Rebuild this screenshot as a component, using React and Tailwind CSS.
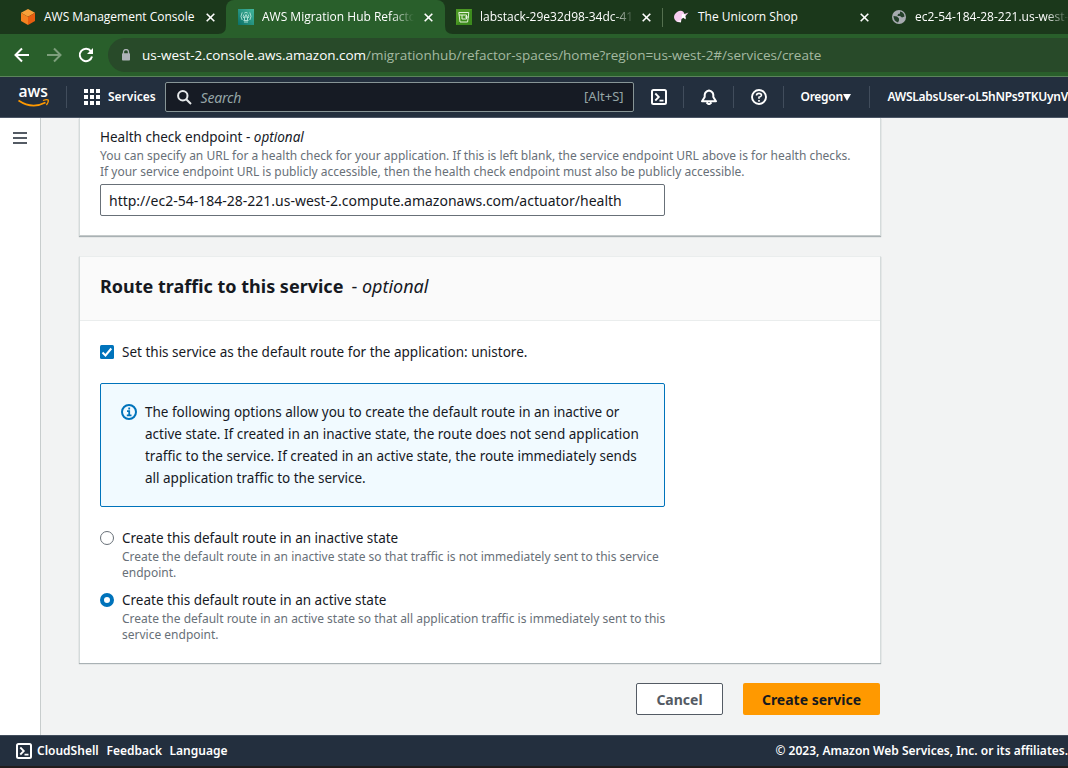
import React from "react";

function Close() {
  return (
    <svg width="9" height="9" viewBox="0 0 9 9" className="shrink-0" stroke="#fff" strokeWidth="1.6">
      <path d="M.7.7l7.6 7.6M8.3.7L.7 8.3" />
    </svg>
  );
}

function Shell({ className = "" }) {
  return (
    <svg width="16" height="16" viewBox="0 0 16 16" fill="none" stroke="#fff" className={"shrink-0 " + className}>
      <rect x="1" y="1" width="14" height="14" rx="1.5" strokeWidth="2" />
      <path d="M4.3 4.5L7.8 8l-3.5 3.5M8.5 11.6h4" strokeWidth="1.8" />
    </svg>
  );
}

function BrowserTabs() {
  return (
    <div className="h-[34px] bg-[#1b381b] flex text-[12px] text-white font-['Open_Sans','Noto_Sans',sans-serif] whitespace-nowrap overflow-hidden">
      <div className="w-[226px] shrink-0 flex items-center pl-5 pr-[11px]">
        <svg width="16" height="16" viewBox="0 0 16 16" className="shrink-0">
          <path d="M8 0l7 3.8L8 7.7 1 3.8z" fill="#f9a13a" />
          <path d="M1 3.8l7 3.9V16l-7-4z" fill="#f58220" />
          <path d="M15 3.8L8 7.7V16l7-4z" fill="#e85d10" />
        </svg>
        <span className="ml-2 flex-1">AWS Management Console</span>
        <Close />
      </div>
      <div className="w-[219px] shrink-0 flex items-center pl-3 pr-3 bg-[#295f2b] rounded-t-[8px] relative">
        <svg width="8" height="8" viewBox="0 0 8 8" className="absolute -left-2 bottom-0"><path d="M8 0v8H0q8 0 8-8z" fill="#295f2b" /></svg>
        <svg width="8" height="8" viewBox="0 0 8 8" className="absolute -right-2 bottom-0"><path d="M0 0v8h8Q0 8 0 0z" fill="#295f2b" /></svg>
        <svg width="16" height="16" viewBox="0 0 16 16" fill="none" className="shrink-0">
          <defs>
            <linearGradient id="hub" x1="0" y1="1" x2="1" y2="0"><stop stopColor="#0b7067" /><stop offset="1" stopColor="#43b79c" /></linearGradient>
          </defs>
          <path d="M0 0h16v16H0z" fill="url(#hub)" />
          <path d="M4.2 3.4Q1.8 7.5 4.2 11M11.8 3.4q2.4 4.1 0 7.6M5.7 5.5q-1 2 0 3.5M10.3 5.5q1 2 0 3.5M6.2 4.2Q8 2.5 9.800 4.200M5.500 11.500h5M8 5.500L6.500 8v3M8 5.500L9.500 8v3M6.500 8h3M6 13h4" stroke="#b7e6da" strokeWidth=".9" />
        </svg>
        <span className="ml-2 w-[152px] overflow-hidden [mask-image:linear-gradient(to_right,#000_85%,transparent)]">AWS Migration Hub Refactor Spaces</span>
        <span className="flex-1" />
        <Close />
      </div>
      <div className="w-[218px] shrink-0 flex items-center pl-[11px] pr-[12px]">
        <svg width="16" height="16" viewBox="0 0 16 16" fill="none" className="shrink-0">
          <path d="M0 0h16v16H0z" fill="#3d8b1d" />
          <path d="M0 0h16L0 16z" fill="#5fa92e" opacity=".45" />
          <path d="M2.800 3.500h10l-1.200 9.500H4zM3 6h7.500v4H6M6 6v4M9 8h4" stroke="#e4f2d9" strokeWidth="1" />
        </svg>
        <span className="ml-2 w-[155px] overflow-hidden [mask-image:linear-gradient(to_right,#000_85%,transparent)]">labstack-29e32d98-34dc-411f-9</span>
        <span className="flex-1" />
        <Close />
      </div>
      <div className="w-[217px] shrink-0 flex items-center pl-[11px] pr-[11px] relative">
        <div className="absolute left-[-1px] top-2 h-[19px] w-px bg-[#54704f]" />
        <svg width="15" height="14" viewBox="0 0 15 14" className="shrink-0">
          <path d="M3 2Q7-.5 9.500 2l1 2 4-1.500-3.500 4 .5 3-2.500-2-1.500 1.500-.5 3Q3 13 1 10T1 4z" fill="#f7cdf0" />
          <path d="M8 4l3 .5L12 9 9.500 7.500 7.500 9zM3 11l4-.5v2z" fill="#fff" />
        </svg>
        <span className="ml-[9px] flex-1">The Unicorn Shop</span>
        <Close />
      </div>
      <div className="flex-1 flex items-center pl-3 relative overflow-hidden">
        <div className="absolute left-[-1px] top-2 h-[19px] w-px bg-[#54704f]" />
        <svg width="14" height="14" viewBox="0 0 14 14" className="shrink-0">
          <circle cx="7" cy="7" r="7" fill="#a6aaaf" />
          <path d="M1.500 6l3.500.5 2 2v2l-1 2Q1.500 11 1.500 6zM8 1.500q4 .5 4.500 5L10 7.500 8 6H5.500L6 4l2-.5z" fill="#24402a" />
        </svg>
        <span className="ml-[9px] w-[154px] shrink-0 overflow-hidden [mask-image:linear-gradient(to_right,#000_85%,transparent)]">ec2-54-184-28-221.us-west-2.co</span>
      </div>
    </div>
  );
}

function Toolbar() {
  return (
    <div className="h-[43px] bg-[#295f2b] border-b border-[#5b845b] flex items-center pl-[14px]">
      <svg width="16" height="16" viewBox="0 0 16 16" fill="none" stroke="#fff" strokeWidth="2"><path d="M15 8H2M8 1.500L1.500 8 8 14.500" /></svg>
      <svg width="16" height="16" viewBox="0 0 16 16" fill="none" stroke="#7d9f7c" strokeWidth="2" className="ml-4"><path d="M1 8h13M8 1.500L14.500 8 8 14.500" /></svg>
      <svg width="16" height="16" viewBox="0 0 16 16" className="ml-4"><path d="M13 4.300A6.200 6.200 0 1 0 14 9.500" fill="none" stroke="#fff" strokeWidth="2" /><path d="M15 1v6H9z" fill="#fff" /></svg>
      <div className="ml-[14px] flex-1 h-[34px] bg-[#284a29] rounded-l-full flex items-center pl-[13px]">
        <svg width="10" height="12" viewBox="0 0 10 12" className="shrink-0"><path d="M2.500 5V3a2.500 2.500 0 0 1 5 0v2" fill="none" stroke="#aeb3b8" strokeWidth="1.300" /><rect x="1" y="4.300" width="8" height="7.200" rx=".8" fill="#aeb3b8" /></svg>
        <span className="ml-[11px] text-[13.500px] leading-5 tracking-[-0.02px] text-[#a4b9a1] whitespace-nowrap font-['Open_Sans','Noto_Sans',sans-serif]">
          <span className="text-white">us-west-2.console.aws.amazon.com</span>/migrationhub/refactor-spaces/home?region=us-west-2#/services/create
        </span>
      </div>
    </div>
  );
}

function Divider() {
  return <div className="w-px h-[22px] bg-[#414d5c] shrink-0" />;
}

function Header() {
  return (
    <div className="h-[41px] bg-[#232f3e] border-b border-[#4b5666] flex items-center text-white whitespace-nowrap overflow-hidden text-[12px] font-semibold">
      <svg width="32" height="22" viewBox="0 0 32 22" className="ml-[18px] shrink-0">
        <text x="0.500" y="10.500" fontSize="16" fontWeight="600" fontFamily="Open Sans" textLength="29.500" lengthAdjust="spacingAndGlyphs" fill="#fff">aws</text>
        <path d="M.5 14.500Q14 23.500 27.500 16.500" fill="none" stroke="#f90" strokeWidth="1.700" />
        <path d="M25 14.500q4-1.500 5.200-.5.600 2-1.800 5" fill="none" stroke="#f90" strokeWidth="1.300" />
      </svg>
      <div className="ml-4 flex"><Divider /></div>
      <svg width="16" height="16" viewBox="0 0 16 16" className="ml-[17px] shrink-0" fill="#fff">
        <path d="M0 0h4v4H0zM6 0h4v4H6zM12 0h4v4h-4zM0 6h4v4H0zM6 6h4v4H6zM12 6h4v4h-4zM0 12h4v4H0zM6 12h4v4H6zM12 12h4v4h-4z" />
      </svg>
      <span className="ml-2 w-[62px]">Services</span>
      <div className="w-[469px] h-[30px] shrink-0 bg-[#161b24] border border-[#879596] rounded-[2px] flex items-center pl-[11px] pr-[9px] font-normal text-[14px] text-[#95a5a6]">
        <svg width="15" height="15" viewBox="0 0 15 15" fill="none" stroke="#e6e9ea" strokeWidth="2"><circle cx="5.800" cy="5.800" r="4.700" /><path d="M9.200 9.200l4.800 4.800" /></svg>
        <span className="ml-[9px] italic flex-1 tracking-[-0.2px]">Search</span>
        <span className="text-[13px]">[Alt+S]</span>
      </div>
      <Shell className="ml-[17px]" />
      <div className="ml-4 flex"><Divider /></div>
      <svg width="16" height="16" viewBox="0 0 16 16" className="ml-[17px] shrink-0" fill="none" stroke="#fff" strokeWidth="2"><path d="M1 12.200L3.700 8V5.800Q4 2.500 8 1.500q4 1 4.300 4.300V8l2.700 4.200zM5.500 13.500L8 15.500l2.500-2" strokeLinejoin="round" /></svg>
      <div className="ml-4 flex"><Divider /></div>
      <svg width="16" height="16" viewBox="0 0 16 16" className="ml-[17px] shrink-0" fill="none" stroke="#fff" strokeWidth="1.900"><circle cx="8" cy="8" r="7" /><path d="M5.500 6.500Q5.600 4.400 8 4.400t2.500 1.800Q10.400 7.400 8 8.200V9.800M8 11v1.800" strokeWidth="1.600" /></svg>
      <div className="ml-4 flex"><Divider /></div>
      <span className="ml-[17px] w-[47px] tracking-[-0.3px]">Oregon</span>
      <svg width="8" height="7" viewBox="0 0 8 7" className="shrink-0" fill="#fff"><path d="M0 0h8L4 7z" /></svg>
      <div className="ml-[18px] flex"><Divider /></div>
      <span className="ml-[17px] tracking-[-0.25px]">AWSLabsUser-oL5hNPs9TKUynV</span>
    </div>
  );
}

const cardBase = "w-[802px] bg-white border-x border-[#d5dbdb] shadow-[0_1px_1px_rgba(0,28,36,0.3)] ";

function Radio({ checked, title, lines }) {
  return (
    <div className="flex">
      <span className={checked ? "mt-[4px] w-[14px] h-[14px] rounded-full border-[4.500px] border-[#0073bb] bg-white" : "mt-[4px] w-[14px] h-[14px] rounded-full border border-[#687078] bg-white"} />
      <div className="ml-2">
        <div className="h-[22px] leading-[22px] text-[13.500px]">{title}</div>
        {lines.map((l) => (
          <div key={l} className="text-[12px] leading-4 text-[#687078]">{l}</div>
        ))}
      </div>
    </div>
  );
}

export default function App() {
  return (
    <div className="w-[1068px] h-[768px] overflow-hidden flex flex-col bg-[#211c1c] text-[#16191f] font-['Noto_Sans','Open_Sans',sans-serif]">
      <BrowserTabs />
      <Toolbar />
      <Header />
      <div className="flex-1 min-h-0 flex bg-[#f2f3f3] whitespace-nowrap">
        <div className="w-[41px] shrink-0 bg-white border-r border-[#c8cdcd] pt-[14px] pl-[13px]">
          <svg width="14" height="12" viewBox="0 0 14 12" fill="#545b64"><path d="M0 0h14v2H0zM0 5h14v2H0zM0 10h14v2H0z" /></svg>
        </div>
        <div className="ml-[38px] w-[802px]">
          <div className={cardBase + "h-[118px] pl-5 pt-2 border-b border-b-[#c5caca]"}>
            <div className="text-[13.500px] leading-[22px]">Health check endpoint - <i>optional</i></div>
            <div className="text-[12px] leading-4 text-[#687078]">You can specify an URL for a health check for your application. If this is left blank, the service endpoint URL above is for health checks.</div>
            <div className="text-[12px] leading-4 text-[#687078]">If your service endpoint URL is publicly accessible, then the health check endpoint must also be publicly accessible.</div>
            <div className="mt-1 w-[565px] h-8 border border-[#687078] rounded-[2px] pl-2 flex items-center text-[14px]">http://ec2-54-184-28-221.us-west-2.compute.amazonaws.com/actuator/health</div>
          </div>
          <div className={cardBase + "mt-5 h-[407px] border-t border-t-[#eaeded]"}>
            <div className="h-16 bg-[#fafafa] border-b border-[#eaeded] pl-5 flex items-center text-[18px] pb-1">
              <span className="font-bold">Route traffic to this service</span>
              <span className="ml-2">- <i>optional</i></span>
            </div>
            <div className="pl-5">
              <div className="mt-5 h-[22px] flex items-center text-[13.500px]">
                <svg width="14" height="14" viewBox="0 0 14 14"><rect width="14" height="14" rx="1.500" fill="#0073bb" /><path d="M2.500 7.500l3 3L11.300 3.500" fill="none" stroke="#fff" strokeWidth="2" /></svg>
                <span className="ml-2">Set this service as the default route for the application: unistore.</span>
              </div>
              <div className="mt-5 w-[565px] h-[124px] border border-[#0073bb] rounded-[2px] bg-[#f1faff] flex pl-5 pt-[17px]">
                <svg width="16" height="16" viewBox="0 0 16 16" fill="none" stroke="#0073bb" className="mt-[3px] shrink-0"><circle cx="8" cy="8" r="7" strokeWidth="2" /><path d="M8.200 3.500v2M6 7.200h2.200V11M5.800 11.300h4.700" strokeWidth="1.800" /></svg>
                <div className="ml-2 text-[13.500px] leading-[22px]">
                  <div>The following options allow you to create the default route in an inactive or</div>
                  <div>active state. If created in an inactive state, the route does not send application</div>
                  <div>traffic to the service. If created in an active state, the route immediately sends</div>
                  <div>all application traffic to the service.</div>
                </div>
              </div>
              <div className="mt-5 flex flex-col gap-2">
                <Radio title="Create this default route in an inactive state" lines={["Create the default route in an inactive state so that traffic is not immediately sent to this service", "endpoint."]} />
                <Radio checked title="Create this default route in an active state" lines={["Create the default route in an active state so that all application traffic is immediately sent to this", "service endpoint."]} />
              </div>
            </div>
          </div>
          <div className="mt-5 flex justify-end gap-5 pr-px text-[14px] font-bold">
            <button className="w-[87px] h-8 border border-[#545b64] rounded-[2px] bg-white text-[#545b64]">Cancel</button>
            <button className="w-[137px] h-8 rounded-[2px] bg-[#ff9900]">Create service</button>
          </div>
        </div>
      </div>
      <div className="h-[31px] shrink-0 mb-[2px] bg-[#232f3e] border-t border-[#414d5c] flex items-center text-white text-[12px] font-semibold whitespace-nowrap overflow-hidden pl-4">
        <Shell />
        <span className="ml-[5px] w-[84px]">CloudShell</span>
        <span className="w-[76px]">Feedback</span>
        <span className="w-[606px] shrink-0">Language</span>
        <span>© 2023, Amazon Web Services, Inc. or its affiliates.</span>
      </div>
    </div>
  );
}
